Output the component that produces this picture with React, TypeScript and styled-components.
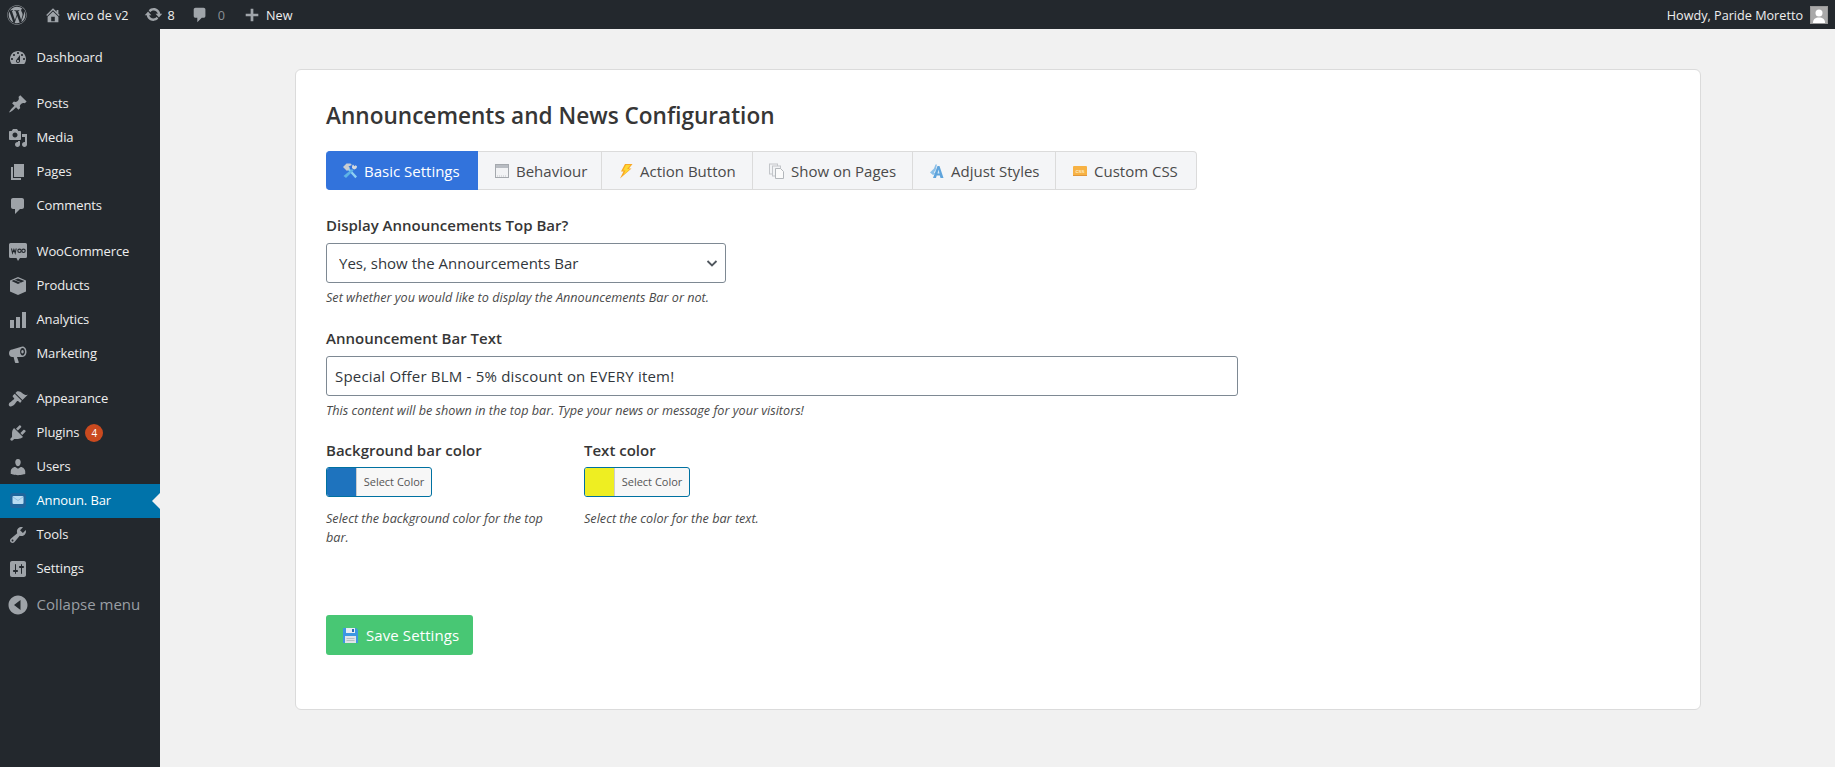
import { ReactNode, useState } from 'react';
import styled, { createGlobalStyle } from 'styled-components';
import { FaWordpress } from 'react-icons/fa';

const GlobalStyle = createGlobalStyle`
    html, body, #root {
        margin: 0;
        height: 100%;
    }
    body {
        background: #f1f1f1;
        font-family: "Open Sans", "Noto Sans", "Liberation Sans", sans-serif;
        color: #444;
    }
    * {
        box-sizing: border-box;
    }
`;

const Page = styled.div`
    display: flex;
    flex-direction: column;
    height: 100%;
    min-height: 767px;
    overflow: hidden;
`;

/* top admin bar */
const AdminBar = styled.header`
    display: flex;
    align-items: center;
    justify-content: space-between;
    height: 29px;
    flex: none;
    background: #23282d;
    color: #eee;
    font-size: 12.65px;
    padding: 0 7px 0 7px;
`;

const BarGroup = styled.div`
    display: flex;
    align-items: center;
`;

const BarItem = styled.div<{ gap?: number; left?: number; dim?: boolean }>`
    display: flex;
    align-items: center;
    gap: ${props => props.gap ?? 5}px;
    margin-left: ${props => props.left ?? 0}px;
    color: ${props => props.dim ? '#8b9095' : '#eee'};
    svg {
        color: #a0a5aa;
    }
`;

const Avatar = styled.div`
    width: 18px;
    height: 18px;
    margin-left: 7px;
    background: #a9a9a9;
    border: 1px solid #999;
    overflow: hidden;
`;

const Body = styled.div`
    display: flex;
    flex: 1;
    min-height: 0;
`;

/* left menu */
const Sidebar = styled.nav`
    width: 160px;
    flex: none;
    background: #23282d;
    padding-top: 12px;
`;

const MenuRow = styled.div<{ active?: boolean; sep?: number }>`
    position: relative;
    display: flex;
    align-items: center;
    height: 34px;
    margin-top: ${props => props.sep ?? 0}px;
    padding-left: 8px;
    font-size: 13px;
    letter-spacing: -0.1px;
    color: ${props => props.active ? '#fff' : '#eee'};
    background: ${props => props.active ? '#0073aa' : 'transparent'};
    ${props => props.active && `
        &::after {
            content: '';
            position: absolute;
            right: 0;
            top: 50%;
            margin-top: -8px;
            border: 8px solid transparent;
            border-right-color: #f1f1f1;
            border-left-width: 0;
        }
    `}
`;

const MenuIcon = styled.span`
    display: flex;
    width: 28.5px;
    flex: none;
    color: #9ea3a8;
`;

const MenuText = styled.span`
    padding-bottom: 2px;
`;

const CollapseRow = styled(MenuRow)`
    margin-top: 2px;
    font-size: 15px;
    letter-spacing: 0;
    color: #9a9fa4;
`;

const Badge = styled.span`
    display: inline-flex;
    align-items: center;
    justify-content: center;
    width: 18px;
    height: 18px;
    margin-left: 6px;
    border-radius: 50%;
    background: #ca4a1f;
    color: #fff;
    font-size: 10px;
`;

/* main content */
const Main = styled.main`
    flex: 1;
    min-width: 0;
    padding: 40px 134px 40px 135px;
`;

const Card = styled.section`
    height: 641px;
    padding: 0 30px;
    background: #fff;
    border: 1px solid #dbdbdb;
    border-radius: 6px;
`;

const Title = styled.h1`
    margin: 0;
    padding-top: 30px;
    height: 81px;
    font-size: 22.6px;
    line-height: 32px;
    font-weight: 600;
    color: #363636;
`;

const Tabs = styled.div`
    display: flex;
    height: 39px;
`;

const Tab = styled.div<{ active?: boolean; w: number }>`
    display: flex;
    align-items: center;
    gap: 6px;
    width: ${props => props.w}px;
    padding-left: 16px;
    border: 1px solid ${props => props.active ? '#3273dc' : '#dbdbdb'};
    border-left: none;
    background: ${props => props.active ? '#3273dc' : '#f4f5f7'};
    color: ${props => props.active ? '#fff' : '#4a4a4a'};
    font-size: 15px;
    white-space: nowrap;
    &:first-child {
        border-radius: 4px 0 0 4px;
    }
    &:last-child {
        border-radius: 0 4px 4px 0;
    }
`;

const Field = styled.div<{ top: number }>`
    margin-top: ${props => props.top}px;
`;

const Label = styled.div`
    height: 20px;
    margin-bottom: 8px;
    font-size: 15px;
    line-height: 20px;
    font-weight: 600;
    color: #363636;
`;

const SelectWrap = styled.div`
    position: relative;
    width: 400px;
`;

const Select = styled.select`
    display: block;
    width: 100%;
    height: 40px;
    padding: 0 24px 0 12px;
    appearance: none;
    background: #fff;
    border: 1px solid #7e8993;
    border-radius: 3px;
    font: 400 15px "Open Sans", "Noto Sans", sans-serif;
    color: #32373c;
`;

const Chevron = styled.svg`
    position: absolute;
    right: 8px;
    top: 14px;
    pointer-events: none;
`;

const TextInput = styled.input`
    display: block;
    width: 912px;
    height: 40px;
    padding: 0 8px;
    background: #fff;
    border: 1px solid #7e8993;
    border-radius: 3px;
    font: 400 15px "Open Sans", "Noto Sans", sans-serif;
    letter-spacing: 0.2px;
    color: #32373c;
`;

const Help = styled.p`
    margin: 5px 0 0;
    font-size: 12.65px;
    line-height: 19px;
    font-style: italic;
    color: #4a4a4a;
`;

const ColorRow = styled.div`
    display: flex;
    margin-top: 20px;
`;

const ColorField = styled.div`
    width: 258px;
    padding-right: 36px;
    ${Label} {
        margin-bottom: 7px;
    }
    ${Help} {
        margin-top: 12px;
    }
`;

const ColorButton = styled.div`
    display: flex;
    width: 106px;
    height: 30px;
    background: #f7f7f7;
    border: 1px solid #0071a1;
    border-radius: 3px;
    overflow: hidden;
`;

const Swatch = styled.span<{ color: string }>`
    width: 30px;
    flex: none;
    background: ${props => props.color};
    border-right: 1px solid #ccc;
`;

const ColorText = styled.span`
    flex: 1;
    text-align: center;
    font-size: 11px;
    line-height: 28px;
    color: #555;
`;

const SaveButton = styled.button`
    display: flex;
    align-items: center;
    gap: 7px;
    width: 147px;
    height: 40px;
    margin-top: 68px;
    padding: 0 0 0 16px;
    border: none;
    border-radius: 3px;
    background: #48c774;
    color: #fff;
    font: 400 15px "Open Sans", "Noto Sans", sans-serif;
    letter-spacing: 0.1px;
`;

const D = ({ d, size = 20 }: { d: string; size?: number }) => (
    <svg width={size} height={size} viewBox="0 0 20 20" fill="currentColor">
        <path fillRule="evenodd" d={d} />
    </svg>
);

const paths = {
    home: 'M16 8.5l1.53 1.53-1.06 1.06L10 4.62l-6.47 6.47-1.06-1.06L10 2.5l4 4v-2h2v4zm-6-2.46l6 5.99V18H4v-5.97zM12 17v-5H8v5h4z',
    update: 'M10.2 3.28c3.53 0 6.43 2.61 6.92 6h2.08l-3.5 4-3.5-4h2.32c-.45-1.97-2.21-3.45-4.32-3.45-1.45 0-2.73.71-3.54 1.78L4.95 5.66C6.23 4.2 8.11 3.28 10.2 3.28zm-.4 13.44c-3.52 0-6.43-2.61-6.92-6H.8l3.5-4c1.17 1.33 2.33 2.67 3.5 4H5.48c.45 1.97 2.21 3.45 4.32 3.45 1.45 0 2.73-.71 3.54-1.78l1.71 1.95c-1.28 1.46-3.15 2.38-5.25 2.38z',
    comment: 'M5 2h9c1.1 0 2 .9 2 2v7c0 1.1-.9 2-2 2h-2l-5 5v-5H5c-1.1 0-2-.9-2-2V4c0-1.1.9-2 2-2z',
    plus: 'M17 8.5v3h-5.5V17h-3v-5.5H3v-3h5.5V3h3v5.5H17z',
    dashboard: 'M3.76 16h12.48c1.1-1.37 1.76-3.11 1.76-5 0-4.42-3.58-8-8-8s-8 3.58-8 8c0 1.89.66 3.63 1.76 5zM10 4c.55 0 1 .45 1 1s-.45 1-1 1-1-.45-1-1 .45-1 1-1zM6 6c.55 0 1 .45 1 1s-.45 1-1 1-1-.45-1-1 .45-1 1-1zm8 0c.55 0 1 .45 1 1s-.45 1-1 1-1-.45-1-1 .45-1 1-1zm-5.37 5.55L12 7v6c0 1.1-.9 2-2 2s-2-.9-2-2c0-.57.24-1.08.63-1.45zM4 10c.55 0 1 .45 1 1s-.45 1-1 1-1-.45-1-1 .45-1 1-1zm12 0c.55 0 1 .45 1 1s-.45 1-1 1-1-.45-1-1 .45-1 1-1zm-5 3c0-.55-.45-1-1-1s-1 .45-1 1 .45 1 1 1 1-.45 1-1z',
    pin: 'M10.44 3.02l1.82-1.82 6.36 6.35-1.83 1.82c-1.05-.68-2.48-.57-3.41.36l-.75.75c-.92.93-1.04 2.35-.35 3.41l-1.83 1.82-2.41-2.41-2.8 2.79c-.42.42-3.38 2.71-3.8 2.29s1.86-3.39 2.28-3.81l2.79-2.79L4.1 9.36l1.83-1.82c1.05.69 2.48.57 3.4-.36l.75-.75c.93-.92 1.05-2.35.36-3.41z',
    media: 'M13 11V4c0-.55-.45-1-1-1h-1.67L9 1H5L3.67 3H2c-.55 0-1 .45-1 1v7c0 .55.45 1 1 1h10c.55 0 1-.45 1-1zM7 4.5c1.38 0 2.5 1.12 2.5 2.5S8.38 9.5 7 9.5 4.5 8.38 4.5 7 5.62 4.5 7 4.5zM14 6h5v10.5c0 1.38-1.12 2.5-2.5 2.5S14 17.88 14 16.5s1.12-2.5 2.5-2.5c.17 0 .34.02.5.05V9h-3V6zm-4 8.05V13h2v3.5c0 1.38-1.12 2.5-2.5 2.5S7 17.88 7 16.5 8.12 14 9.5 14c.17 0 .34.02.5.05z',
    page: 'M6 15V2h10v13H6zm-1 1h8v2H3V5h2v11z',
    box: 'M10 1l8 3.6v10.8L10 19l-8-3.6V4.6L10 1zM3.6 5l6.4 2.9L16.4 5 10 2.4 6.8 3.7l6.2 2.5-.9.4-6.2-2.5L3.6 5z',
    chart: 'M18 18V2h-4v16h4zm-6 0V7H8v11h4zm-6 0v-8H2v8h4z',
    megaphone: 'M14.5 2.5c2.3 0 4 2.4 4 5.3s-1.7 5.2-4 5.2H9l1.8 5.2c.1.4-.2.8-.6.8H7.6c-.3 0-.5-.2-.6-.4L5.6 12.9H4.2C2.4 12.9 1 11.3 1 9.2s1.4-3.6 3.2-3.6l8.4-2.5c.6-.4 1.2-.6 1.9-.6zm.1 1.6c-1.4 0-2.5 1.7-2.5 3.7s1.1 3.7 2.5 3.7 2.4-1.7 2.4-3.7-1-3.7-2.4-3.7zm-.1 2c.8 0 1.2.8 1.2 1.7s-.5 1.7-1.2 1.7-1.2-.8-1.2-1.7.4-1.7 1.2-1.7z',
    brush: 'M14.48 11.06L7.41 3.99l1.5-1.5c.5-.56 2.3-.47 3.51.32 1.21.8 1.43 1.28 2.91 2.1 1.18.64 2.45 1.26 4.45.85zm-.71.71L6.7 4.7 4.93 6.47c-.39.39-.39 1.02 0 1.41l1.06 1.06c.39.39.39 1.03 0 1.42-.6.6-1.43 1.11-2.21 1.69-.35.26-.7.53-1.01.84C1.43 13.23 0 15.5 1.39 16.89s3.66-.03 5.01-1.39c.31-.31.58-.66.84-1.01.58-.78 1.09-1.61 1.69-2.21.39-.39 1.02-.39 1.41 0l1.06 1.06c.39.39 1.02.39 1.41 0z',
    plugin: 'M13.11 4.36L9.87 7.6 8 5.73l3.24-3.24c.35-.34 1.05-.2 1.56.32.52.51.66 1.21.31 1.55zm-8 1.77l.91-1.12 9.01 9.01-1.19.84c-.71.71-2.63 1.16-3.82 1.16H6.14L4.9 17.26c-.59.59-1.54.59-2.12 0-.59-.58-.59-1.53 0-2.12l1.24-1.24v-3.88c0-1.13.4-3.19 1.09-3.89zm7.26 3.97l3.24-3.24c.34-.35 1.04-.21 1.55.31.52.51.66 1.21.31 1.55l-3.24 3.25z',
    users: 'M10 9.25c-2.27 0-2.73-3.44-2.73-3.44C7 4.02 7.82 2 9.97 2c2.16 0 2.98 2.02 2.71 3.81 0 0-.41 3.44-2.68 3.44zm0 2.57L12.72 10c2.39 0 4.52 2.33 4.52 4.53v2.49s-3.65 1.13-7.24 1.13c-3.65 0-7.24-1.13-7.24-1.13v-2.49c0-2.25 1.94-4.48 4.47-4.48z',
    tools: 'M16.68 9.77c-1.34 1.34-3.3 1.67-4.95.99l-5.41 6.52c-.99.99-2.59.99-3.58 0s-.99-2.59 0-3.57l6.52-5.42c-.68-1.65-.35-3.61.99-4.95 1.28-1.28 3.12-1.62 4.72-1.06l-2.89 2.89 2.82 2.82 2.86-2.87c.53 1.58.18 3.39-1.08 4.65zM3.81 16.21c.4.39 1.04.39 1.43 0 .4-.4.4-1.04 0-1.43-.39-.4-1.03-.4-1.43 0-.39.39-.39 1.03 0 1.43z',
    settings: 'M18 16V4c0-1.1-.9-2-2-2H4c-1.1 0-2 .9-2 2v12c0 1.1.9 2 2 2h12c1.1 0 2-.9 2-2zM8 11h1c.55 0 1 .45 1 1s-.45 1-1 1H8v1.5c0 .28-.22.5-.5.5s-.5-.22-.5-.5V13H6c-.55 0-1-.45-1-1s.45-1 1-1h1V5.5c0-.28.22-.5.5-.5s.5.22.5.5V11zm5-2h-1c-.55 0-1-.45-1-1s.45-1 1-1h1V5.5c0-.28.22-.5.5-.5s.5.22.5.5V7h1c.55 0 1 .45 1 1s-.45 1-1 1h-1v5.5c0 .28-.22.5-.5.5s-.5-.22-.5-.5V9z',
    collapse: 'M10 .5c5.2 0 9.5 4.3 9.5 9.5s-4.3 9.5-9.5 9.5S.5 15.2.5 10 4.8.5 10 .5zM12.5 15V5l-6.5 5 6.5 5z',
};

const WooIcon = () => (
    <svg width="20" height="20" viewBox="0 0 20 20">
        <path fill="#9ea3a8" d="M2.5 1h15A1.5 1.5 0 0 1 19 2.5v12a1.500 1.500 0 0 1-1.500 1.500H12l-2 3-1.500-3h-6A1.500 1.500 0 0 1 1 14.500v-12A1.500 1.500 0 0 1 2.500 1z" />
        <path fill="none" stroke="#23282d" strokeWidth="1.1" d="M3.500 6.500l1 4.500 1.400-3.500 1.300 3.500 1-4.500" />
        <circle cx="11.500" cy="8.800" r="1.700" fill="none" stroke="#23282d" strokeWidth="1.100" />
        <circle cx="15.500" cy="8.800" r="1.700" fill="none" stroke="#23282d" strokeWidth="1.100" />
    </svg>
);

const AnnounIcon = () => (
    <svg width="20" height="20" viewBox="0 0 20 20">
        <rect x="2" y="2" width="16" height="15" rx="3" fill="#1f659c" />
        <rect x="4.500" y="5" width="11" height="8" rx="1" fill="#b9dcf2" />
        <path d="M5 6l5 3.500L15 6" fill="none" stroke="#8fbfe0" strokeWidth="1" />
    </svg>
);

const ToolsTabIcon = () => (
    <svg width="16" height="16" viewBox="0 0 16 16">
        <path d="M5.500 6.500l1.500-1.500 8 8.500-1.700 1.700z" fill="#8fd0f2" />
        <path d="M10 6l1.500 1.500-7.500 7.500L1.500 13z" fill="#5fb3e6" />
        <path d="M1 4l3.500-3.500h4L10 2 6.500 3.500 8 5 5 8z" fill="#c7ccd1" />
        <path d="M11 1.500l1.500 1.800 1-1 1.500 1c0 2-1.500 3.500-3.500 3L10 5c0-1.500 0-2.500 1-3.500z" fill="#d5d9dd" />
    </svg>
);

const WindowTabIcon = () => (
    <svg width="16" height="16" viewBox="0 0 16 16">
        <rect x="1.500" y="1.500" width="13" height="13" fill="#f2f3f5" stroke="#a5a9ae" />
        <rect x="2" y="2" width="12" height="3" fill="#b8bcc2" />
        <path d="M3 13h10" stroke="#c3c6ca" strokeWidth="1" strokeDasharray="1 1" />
    </svg>
);

const BoltTabIcon = () => (
    <svg width="16" height="16" viewBox="0 0 16 16">
        <path d="M7 1h7.500L11 5.500h2.500L2 15.500 5.500 8.500H3z" fill="#f9a825" />
        <path d="M8 2h4.500L9 6h3L5.500 12 7.500 7.500H5z" fill="#fdd835" />
    </svg>
);

const PagesTabIcon = () => (
    <svg width="16" height="16" viewBox="0 0 16 16">
        <rect x="0.500" y="1" width="8" height="10" fill="#f2f3f5" stroke="#c3c6ca" />
        <rect x="3.500" y="3" width="8" height="10" fill="#f2f3f5" stroke="#c3c6ca" />
        <path d="M6.500 5.500h5l3 3v7h-8z" fill="#fbfbfb" stroke="#b3b7bb" />
    </svg>
);

const StyleTabIcon = () => (
    <svg width="16" height="16" viewBox="0 0 16 16">
        <path d="M1 9.500l4-4 1.500-4H8l-1.500 6L5 9l1 2-2 1z" fill="#8cc0e8" />
        <path d="M8.500 3h2l4 12h-3l-.7-2.500H7.700L7 15H4z" fill="#5fa4dc" />
        <path d="M9.500 6.500l-1 4h2z" fill="#d6e9f7" />
    </svg>
);

const CssTabIcon = () => (
    <svg width="16" height="16" viewBox="0 0 16 16">
        <rect x="1" y="3" width="14" height="10" rx="1" fill="#f7b244" />
        <rect x="1" y="12" width="14" height="1" fill="#e0963a" />
        <text x="8" y="10" textAnchor="middle" fontSize="6" fontFamily="Liberation Sans" fill="#fff3d6">css</text>
    </svg>
);

const FloppyIcon = () => (
    <svg width="17" height="17" viewBox="0 0 17 17">
        <path d="M1 1h13l2 2v13H1z" fill="#3c97e3" />
        <rect x="4" y="1" width="9" height="5" fill="#e6edf4" />
        <rect x="10" y="2" width="2" height="3" fill="#2a6db5" />
        <rect x="3" y="9" width="11" height="7" fill="#dfe4e8" />
        <path d="M4.500 11.500h8M4.500 13.500h8" stroke="#b5bec6" strokeWidth="1" />
    </svg>
);

const menu: { label: string; icon: ReactNode; sep?: number; active?: boolean; badge?: string }[] = [
    { label: 'Dashboard', icon: <D d={paths.dashboard} /> },
    { label: 'Posts', icon: <D d={paths.pin} />, sep: 12 },
    { label: 'Media', icon: <D d={paths.media} /> },
    { label: 'Pages', icon: <D d={paths.page} /> },
    { label: 'Comments', icon: <D d={paths.comment} /> },
    { label: 'WooCommerce', icon: <WooIcon />, sep: 12 },
    { label: 'Products', icon: <D d={paths.box} /> },
    { label: 'Analytics', icon: <D d={paths.chart} /> },
    { label: 'Marketing', icon: <D d={paths.megaphone} /> },
    { label: 'Appearance', icon: <D d={paths.brush} />, sep: 11 },
    { label: 'Plugins', icon: <D d={paths.plugin} />, badge: '4' },
    { label: 'Users', icon: <D d={paths.users} /> },
    { label: 'Announ. Bar', icon: <AnnounIcon />, active: true },
    { label: 'Tools', icon: <D d={paths.tools} /> },
    { label: 'Settings', icon: <D d={paths.settings} /> },
];

const tabs: { label: string; icon: ReactNode; w: number }[] = [
    { label: 'Basic Settings', icon: <ToolsTabIcon />, w: 152 },
    { label: 'Behaviour', icon: <WindowTabIcon />, w: 124 },
    { label: 'Action Button', icon: <BoltTabIcon />, w: 151 },
    { label: 'Show on Pages', icon: <PagesTabIcon />, w: 160 },
    { label: 'Adjust Styles', icon: <StyleTabIcon />, w: 143 },
    { label: 'Custom CSS', icon: <CssTabIcon />, w: 141 },
];

export default function App() {
    const [text, setText] = useState('Special Offer BLM - 5% discount on EVERY item!');

    return (
        <Page>
            <GlobalStyle />
            <AdminBar>
                <BarGroup>
                    <BarItem><FaWordpress size={20} /></BarItem>
                    <BarItem left={17} gap={5}><D d={paths.home} size={18} />wico de v2</BarItem>
                    <BarItem left={15} gap={5}><D d={paths.update} size={19} />8</BarItem>
                    <BarItem left={16} gap={9} dim><D d={paths.comment} size={18} />0</BarItem>
                    <BarItem left={18} gap={5}><D d={paths.plus} size={18} />New</BarItem>
                </BarGroup>
                <BarGroup>
                    Howdy, Paride Moretto
                    <Avatar>
                        <svg width="16" height="16" viewBox="0 0 16 16">
                            <circle cx="8" cy="6" r="3.500" fill="#fff" />
                            <path d="M2 16c0-4 2.500-5.500 6-5.500s6 1.500 6 5.500z" fill="#fff" />
                        </svg>
                    </Avatar>
                </BarGroup>
            </AdminBar>
            <Body>
                <Sidebar>
                    {menu.map(m =>
                        <MenuRow key={m.label} sep={m.sep} active={m.active}>
                            <MenuIcon>{m.icon}</MenuIcon>
                            <MenuText>{m.label}</MenuText>
                            {m.badge && <Badge>{m.badge}</Badge>}
                        </MenuRow>
                    )}
                    <CollapseRow>
                        <MenuIcon><D d={paths.collapse} /></MenuIcon>
                        <MenuText>Collapse menu</MenuText>
                    </CollapseRow>
                </Sidebar>
                <Main>
                    <Card>
                        <Title>Announcements and News Configuration</Title>
                        <Tabs>
                            {tabs.map((t, i) =>
                                <Tab key={t.label} active={i === 0} w={t.w}>
                                    {t.icon}
                                    {t.label}
                                </Tab>
                            )}
                        </Tabs>
                        <Field top={25}>
                            <Label>Display Announcements Top Bar?</Label>
                            <SelectWrap>
                                <Select defaultValue="yes">
                                    <option value="yes">Yes, show the Annourcements Bar</option>
                                    <option value="no">No, hide the Annourcements Bar</option>
                                </Select>
                                <Chevron width="12" height="12" viewBox="0 0 12 12" fill="none" stroke="#50575e" strokeWidth="1.800">
                                    <path d="M1.500 4l4.500 4.500L10.500 4" />
                                </Chevron>
                            </SelectWrap>
                            <Help>Set whether you would like to display the Announcements Bar or not.</Help>
                        </Field>
                        <Field top={21}>
                            <Label>Announcement Bar Text</Label>
                            <TextInput value={text} onChange={e => setText(e.target.value)} />
                            <Help>This content will be shown in the top bar. Type your news or message for your visitors!</Help>
                        </Field>
                        <ColorRow>
                            <ColorField>
                                <Label>Background bar color</Label>
                                <ColorButton>
                                    <Swatch color="#1e73be" />
                                    <ColorText>Select Color</ColorText>
                                </ColorButton>
                                <Help>Select the background color for the top bar.</Help>
                            </ColorField>
                            <ColorField>
                                <Label>Text color</Label>
                                <ColorButton>
                                    <Swatch color="#eeee22" />
                                    <ColorText>Select Color</ColorText>
                                </ColorButton>
                                <Help>Select the color for the bar text.</Help>
                            </ColorField>
                        </ColorRow>
                        <SaveButton>
                            <FloppyIcon />
                            Save Settings
                        </SaveButton>
                    </Card>
                </Main>
            </Body>
        </Page>
    );
}
